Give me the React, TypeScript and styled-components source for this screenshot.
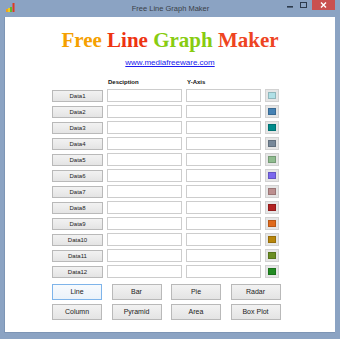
import React from 'react'
import styled, { createGlobalStyle } from 'styled-components'

const GlobalStyle = createGlobalStyle`
  html, body {
    margin: 0;
    padding: 0;
    background: #8ba3c3;
  }
  * {
    box-sizing: border-box;
  }
`

const swatches = [
  '#b0e0e6',
  '#4682b4',
  '#008b8b',
  '#778899',
  '#8fbc8f',
  '#7b68ee',
  '#bc8f8f',
  '#b22222',
  '#e06a1c',
  '#b8860b',
  '#6b8e23',
  '#228b22',
]

const charts = ['Line', 'Bar', 'Pie', 'Radar', 'Column', 'Pyramid', 'Area', 'Box Plot']

export default function App() {
  return (
    <Window>
      <GlobalStyle />
      <TitleBar>
        <AppIcon width="9" height="9" viewBox="0 0 9 9">
          <rect x="0" y="6" width="2" height="3" fill="#f0a020" />
          <rect x="2" y="5" width="2" height="4" fill="#e8d020" />
          <rect x="4" y="4" width="2" height="5" fill="#60b830" />
          <rect x="6.5" y="0" width="2" height="9" fill="#e03a20" />
        </AppIcon>
        <TitleText>Free Line Graph Maker</TitleText>
        <Controls>
          <MinButton>
            <svg width="7" height="7" viewBox="0 0 7 7">
              <rect x="0" y="4" width="6" height="1.6" fill="#2c3a4d" />
            </svg>
          </MinButton>
          <MaxButton>
            <svg width="7" height="7" viewBox="0 0 7 7">
              <rect x="0.5" y="0.5" width="6" height="5" fill="none" stroke="#2c3a4d" strokeWidth="1" />
            </svg>
          </MaxButton>
          <CloseButton>
            <svg width="7" height="6" viewBox="0 0 7 6">
              <path d="M1 0.5 L6 5.5 M6 0.5 L1 5.5" stroke="#fff" strokeWidth="1.4" />
            </svg>
          </CloseButton>
        </Controls>
      </TitleBar>
      <Client>
        <Heading>
          <Word color="#f5a000">Free</Word> <Word color="#ee3311">Line</Word>{' '}
          <Word color="#88cc11">Graph</Word> <Word color="#ee4422">Maker</Word>
        </Heading>
        <Link href="#">www.mediafreeware.com</Link>
        <Grid>
          <span />
          <ColumnLabel>Desciption</ColumnLabel>
          <ColumnLabel>Y-Axis</ColumnLabel>
          <span />
        </Grid>
        <Rows>
          {swatches.map((c, i) => (
            <DataRow key={c}>
              <DataButton>Data{i + 1}</DataButton>
              <Field />
              <Field />
              <Swatch>
                <SwatchFill color={c} />
              </Swatch>
            </DataRow>
          ))}
        </Rows>
        <ChartGrid>
          {charts.map((name, i) => (
            <ChartButton key={name} $focused={i === 0}>
              {name}
            </ChartButton>
          ))}
        </ChartGrid>
      </Client>
    </Window>
  )
}

const Window = styled.div`
  width: 340px;
  height: 339px;
  background: #8ba3c3;
  display: flex;
  flex-direction: column;
  padding: 0 5px 6px 4px;
`

const TitleBar = styled.div`
  height: 17px;
  display: grid;
  grid-template-columns: 1fr auto 1fr;
  align-items: start;
  padding-left: 2px;
`

const AppIcon = styled.svg`
  margin-top: 3px;
`

const TitleText = styled.div`
  font-family: 'Liberation Sans', Arial, sans-serif;
  font-size: 7.5px;
  line-height: 9px;
  color: #3a3f48;
  margin-top: 4px;
`

const Controls = styled.div`
  display: flex;
  justify-content: flex-end;
  align-items: flex-start;
`

const MinButton = styled.div`
  width: 13px;
  height: 10px;
  display: flex;
  align-items: center;
  justify-content: center;
`

const MaxButton = styled(MinButton)`
  margin-right: 2px;
`

const CloseButton = styled.div`
  width: 23px;
  height: 10px;
  background: #c9504f;
  display: flex;
  align-items: center;
  justify-content: center;
`

const Client = styled.div`
  flex: 1;
  background: #ffffff;
  border-left: 1px solid #7d95b5;
  border-bottom: 1px solid #7d95b5;
  display: flex;
  flex-direction: column;
  padding-left: 47px;
`

const Heading = styled.div`
  font-family: 'Liberation Serif', 'Times New Roman', serif;
  font-weight: bold;
  font-size: 21px;
  line-height: 24px;
  margin-top: 11px;
  margin-left: -47px;
  text-align: center;
`

const Word = styled.span<{ color: string }>`
  color: ${(p) => p.color};
`

const Link = styled.a`
  align-self: center;
  margin-left: -47px;
  margin-top: 6px;
  font-family: 'Liberation Sans', Arial, sans-serif;
  font-size: 8px;
  line-height: 10px;
  color: #1a1aee;
  text-decoration: underline;
`

const Grid = styled.div`
  display: grid;
  grid-template-columns: 51px 75px 75px 14px;
  column-gap: 4px;
  align-items: center;
`

const DataRow = styled(Grid)`
  height: 13px;
`

const ColumnLabel = styled.div`
  font-family: 'Liberation Sans', Arial, sans-serif;
  font-weight: bold;
  font-size: 6px;
  line-height: 8px;
  color: #111;
  margin-top: 10px;
  padding-left: 1px;
`

const Rows = styled.div`
  display: flex;
  flex-direction: column;
  gap: 3px;
  margin-top: 3px;
`

const DataButton = styled.div`
  height: 12px;
  border: 1px solid #b9b9b9;
  background: linear-gradient(#f2f2f2, #e4e4e4);
  font-family: 'Liberation Sans', Arial, sans-serif;
  font-size: 6px;
  line-height: 10px;
  color: #222;
  text-align: center;
`

const Field = styled.div`
  height: 13px;
  border: 1px solid #cdcdcd;
  background: #fff;
`

const Swatch = styled.div`
  width: 14px;
  height: 13px;
  padding: 2px;
  border: 1px solid #d2d2d2;
  background: #e6e6e6;
`

const SwatchFill = styled.div<{ color: string }>`
  width: 100%;
  height: 100%;
  background: ${(p) => p.color};
  box-shadow: inset 0 0 0 1px rgba(0, 0, 0, 0.18);
`

const ChartGrid = styled.div`
  display: grid;
  grid-template-columns: repeat(4, 50px);
  column-gap: 9.5px;
  row-gap: 4px;
  margin-top: 6px;
`

const ChartButton = styled.div<{ $focused?: boolean }>`
  height: 16px;
  border: 1px solid ${(p) => (p.$focused ? '#7eb4ea' : '#b9b9b9')};
  background: ${(p) =>
    p.$focused ? 'linear-gradient(#f7fafd, #eaf2fa)' : 'linear-gradient(#f2f2f2, #e4e4e4)'};
  font-family: 'Liberation Sans', Arial, sans-serif;
  font-size: 7px;
  line-height: 14px;
  color: #222;
  text-align: center;
`
